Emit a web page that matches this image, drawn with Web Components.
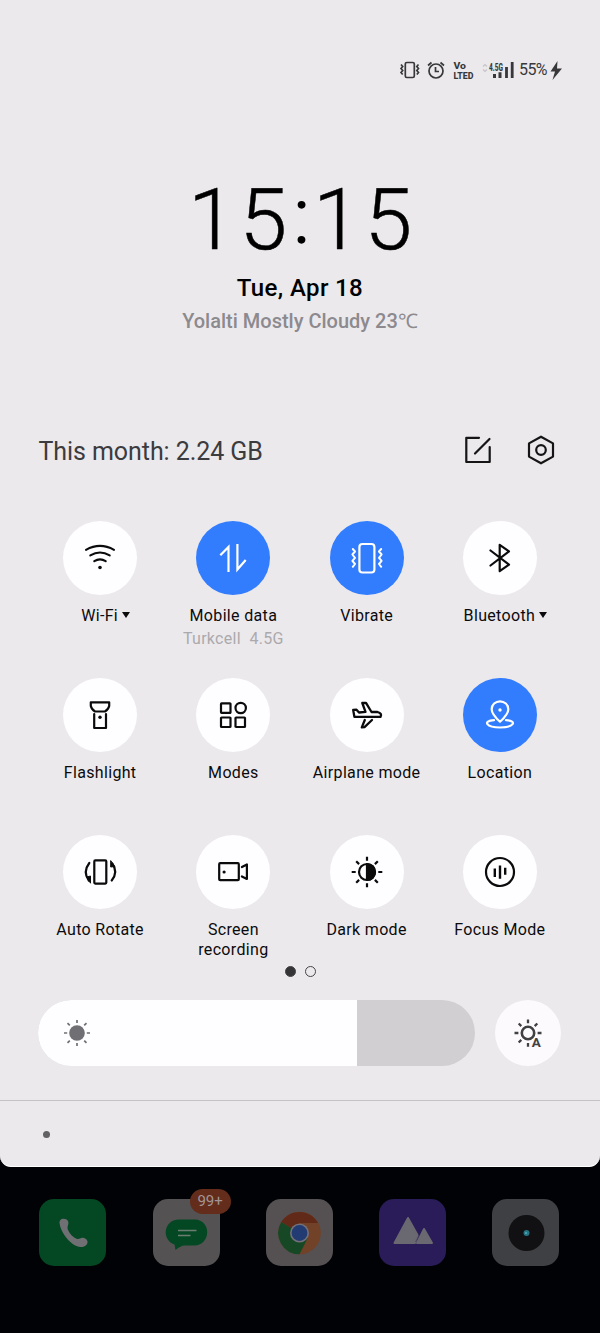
<!DOCTYPE html>
<html lang="en">
<head>
<meta charset="utf-8">
<title>Control center</title>
<style>
  html, body { margin: 0; background: #010205; }
  body { font-family: Roboto, "Liberation Sans", sans-serif; color: #0b0b0c; }
</style>
</head>
<body>
<phone-screen></phone-screen>

<script>
const ICONS = {
  wifi: `<g stroke-width="2.100"><path d="M-14-8.200Q0-16 14-8.200M-9.700-2.600Q0-8.500 9.700-2.600M-5.700 3.200Q0-.5 5.700 3.200"/></g><circle cy="9.500" r="1.800" fill="currentColor" stroke="none"/>`,
  data: `<path stroke-linejoin="miter" stroke-linecap="butt" stroke-width="2.200" d="M-12.700-2.700L-4.500-11V14M4.400-14V11.500L12.700 2"/>`,
  vibrate: `<rect x="-7.600" y="-14" width="15" height="28.500" rx="3"/><path stroke-width="2" d="M-14.200-9l2.200 2.500-2.600 3 2.600 3.300-2.600 3 2.600 3.200-2.200 2.800M14.200-9l-2.200 2.500 2.600 3-2.600 3.300 2.600 3-2.600 3.200 2.200 2.800"/>`,
  bluetooth: `<path d="M-9.500-7.500L9 6.700-.3 13.200V-13.200L9-6.700-9.500 7.500"/>`,
  flash: `<path d="M-9.200-12.700H9.200V-9Q8.400-5.500 5-3.500H-5Q-8.400-5.500-9.200-9ZM-5.800-1V13H6V-1"/><circle cy="2.200" r="1.700" fill="currentColor" stroke="none"/>`,
  modes: `<rect x="-12" y="-11.700" width="9.500" height="9.500" rx=".6"/><circle cx="7.700" cy="-7" r="5.200"/><rect x="-12" y="2.500" width="9.500" height="9.500" rx=".6"/><rect x="2.500" y="2.500" width="9.500" height="9.500" rx=".6"/>`,
  plane: `<path stroke-width="2.300" d="M-13.800-5L-12.600 1.900H13.500Q15.500-1.500 10.500-3H4.500L-1-12.200-4.700-12-1.500-3.200-8-2.500-10.500-5.300ZM-2.200 5L-5.200 12.400-2.500 12.200 5 5"/>`,
  location: `<path d="M0 6.800Q-8.500-1-8.300-6A8.300 7.700 0 0 1 8.300-6Q8.500-1 0 6.800ZM-6 5.200C-18 6-13.500 12.500 0 12.500S18 6 6 5.200"/><circle cy="-5" r="1.700" fill="currentColor" stroke="none"/>`,
  rotate: `<rect x="-5.700" y="-11.600" width="12" height="23.200" rx="1"/><path d="M-10.700-9Q-17.500 0-11.200 8.500M11.700 8.500Q18.500 0 12.200-8.500"/><path stroke-width="1" fill="currentColor" d="M-9.500 10.800V4L-13 5ZM10.700-11V-5L14.500-5.500Z"/>`,
  record: `<rect x="-13.800" y="-8.800" width="19.600" height="17" rx="1"/><path d="M8.900-4.900L13.900-7.500V7L8.900 4.500"/><circle cx="-8.900" cy="0" r="1.600" fill="currentColor" stroke="none"/>`,
  dark: `<circle r="8"/><path d="M0-8A8 8 0 0 1 0 8Z" fill="currentColor"/><path stroke-linecap="butt" d="M0-15.300V-11.300M0 11.300V15.300M-15.300 0H-11.300M11.300 0H15.300M-10.800-10.800L-7.900-7.900M10.800-10.800L7.900-7.900M-10.800 10.800L-7.900 7.900M10.800 10.800L7.900 7.900"/>`,
  focus: `<circle r="14"/><path stroke-linecap="butt" stroke-width="2.400" d="M-5.200-3.500V5M0-6.500V6.700M5.200-4.300V2.700"/>`,
  edit: `<path d="M1-12.200H-11.700V12H11.700V-3M-3 3.500L11.500-11"/>`,
  settings: `<path d="M0-13.300L12-6.600V6.600L0 13.300-12 6.600V-6.600Z"/><circle r="4.800"/>`,
  sun: `<circle r="7.800" fill="currentColor" stroke="none"/><path stroke-width="1.700" stroke-linecap="butt" d="M0-13V-10M0 10V13M-13 0H-9.800M9.800 0H13M-9.500-9.900L-7.200-7.600M9.500-9.900L7.200-7.600M-9.500 9.900L-7.200 7.600M9.500 9.900L7.200 7.600"/>`,
  auto: `<circle r="6.200" stroke-width="2.600"/><path stroke-width="2.300" stroke-linecap="butt" d="M0-13.500V-9.800M0 10V13.700M-13.500 0H-9.600M9.600 0H13.500M-9.300-9.500L-6.700-6.900M9.300-9.500L6.700-6.900M-9.300 9.500L-6.700 6.900"/><text x="3.800" y="13.600" font-size="13.500" font-weight="700" fill="currentColor" stroke="none" font-family="Roboto, sans-serif">A</text>`
};

function define(name, html, setup) {
  const template = document.createElement('template');
  template.innerHTML = html;
  customElements.define(name, class extends HTMLElement {
    constructor() {
      super();
      this.attachShadow({ mode: 'open' }).append(template.content.cloneNode(true));
    }
    connectedCallback() { if (setup) setup(this, this.shadowRoot); }
  });
}

define('line-icon', `
  <style>
    :host { display: block; width: 34px; height: 34px; flex: none; }
    svg { display: block; width: 100%; height: 100%; overflow: visible; }
  </style>
  <svg viewBox="-17 -17 34 34" fill="none" stroke="currentColor" stroke-width="2.200" stroke-linecap="round" stroke-linejoin="round"></svg>
`, (el, root) => { root.querySelector('svg').innerHTML = ICONS[el.getAttribute('name')]; });

define('status-bar', `
  <style>
    :host { display: flex; justify-content: flex-end; align-items: center; height: 20px; padding: 60px 38px 0 0; color: #38383a; }
    svg { display: block; overflow: visible; fill: none; stroke: currentColor; stroke-width: 1.700; }
    text { fill: currentColor; stroke: none; font-family: Roboto, sans-serif; font-weight: 800; }
    .vib { margin-right: 8px; } .alarm { margin-right: 8px; } .volte { margin-right: 8px; } .signal { margin-right: 5px; }
    span { font-size: 16px; line-height: 20px; width: 30px; letter-spacing: -.6px; white-space: nowrap; }
  </style>
  <svg class="vib" width="19" height="20"><rect x="5.300" y="2.500" width="9" height="15" rx="1.500"/><path d="M1 4.500l1.700 2L1 8.500l1.700 2L1 12.500l1.700 2M18.500 4.500l-1.700 2 1.700 2-1.700 2 1.700 2-1.700 2"/></svg>
  <svg class="alarm" width="18" height="20"><circle cx="9" cy="11" r="7"/><path d="M8.500 7V11.500H12M1 5.500L4.500 2.500M17 5.500L13.500 2.500"/></svg>
  <svg class="volte" width="21" height="20"><text x="0.500" y="8.700" font-size="8.800" textLength="12.500" lengthAdjust="spacingAndGlyphs">Vo</text><text x="0.500" y="18.800" font-size="8.800" textLength="20" lengthAdjust="spacingAndGlyphs">LTED</text></svg>
  <svg class="signal" width="32" height="20"><path stroke="#c6c4c8" stroke-width="1.200" d="M1 6.500L3 4.500 5 6.500M1 9.500L3 11.500 5 9.500"/><text x="7" y="10.800" font-size="10.500" textLength="14" lengthAdjust="spacingAndGlyphs">4.5G</text><path stroke-width="3" d="M12.500 14V18M18 12.300V18"/><path stroke-width="2.800" d="M24.500 7V18M30.200 2V18"/></svg>
  <span>55%</span>
  <svg width="13" height="20"><path fill="currentColor" stroke="none" d="M8.500 1L1.500 11.500H6L3.500 20 13 8.500H8Z"/></svg>
`);

define('lock-clock', `
  <style>
    :host { display: block; height: 355px; text-align: center; white-space: nowrap; }
    .time { height: 102px; padding-top: 89px; font-size: 86px; line-height: 102px; font-weight: 300; letter-spacing: 3.800px; color: #000; padding-left: 4px; -webkit-text-stroke: .5px #000; }
    .date { font-size: 24px; line-height: 30px; font-weight: 500; letter-spacing: .38px; margin-top: 2px; color: #000; }
    .weather { font-size: 20px; line-height: 26px; font-weight: 500; color: #8c8a8e; margin-top: 5px; }
  </style>
  <div class="time"><slot name="time"></slot></div>
  <div class="date"><slot name="date"></slot></div>
  <div class="weather"><slot name="weather"></slot></div>
`);

define('usage-row', `
  <style>
    :host { display: flex; align-items: center; height: 34px; padding: 0 42px 0 38.500px; margin-top: -2px; color: #3c3b3e; font-size: 25px; letter-spacing: -.07px; white-space: nowrap; }
    .label { padding-top: 2px; }
    .actions { display: flex; gap: 29px; margin-left: auto; color: #151516; }
  </style>
  <div class="label"><slot></slot></div>
  <div class="actions"><line-icon name="edit"></line-icon><line-icon name="settings"></line-icon></div>
`);

define('quick-tile', `
  <style>
    :host { display: flex; flex-direction: column; align-items: center; height: 157px; color: #0b0b0c; }
    .disc { width: 74px; height: 74px; border-radius: 50%; background: #fefdff; display: grid; place-items: center; }
    :host([active]) .disc { background: #327cfe; color: #fff; }
    .label { display: flex; align-items: center; justify-content: center; gap: 4px; margin-top: 11px; font-size: 16px; line-height: 20px; letter-spacing: .33px; text-align: center; white-space: nowrap; }
    .caret { display: none; width: 0; height: 0; border: 4px solid transparent; border-top: 6px solid; border-bottom: 0; margin-top: -2px; }
    :host([menu]) .caret { display: block; }
    :host([menu]) .label { padding-left: 11px; }
    .note { font-size: 16px; line-height: 20px; letter-spacing: .3px; color: #aba9ad; margin-top: 3px; white-space: pre; }
  </style>
  <div class="disc"><line-icon></line-icon></div>
  <div class="label"><span><slot></slot></span><i class="caret"></i></div>
  <div class="note"><slot name="note"></slot></div>
`, (el, root) => {
  const old = root.querySelector('line-icon');
  const icon = document.createElement('line-icon');
  icon.setAttribute('name', el.getAttribute('icon'));
  old.replaceWith(icon);
});

define('tile-grid', `
  <style>
    :host { display: grid; grid-template-columns: repeat(4, 1fr); padding: 0 33.500px; margin-top: 54px; height: 440px; grid-auto-rows: 157px; }
  </style>
  <slot></slot>
`);

define('page-dots', `
  <style>
    :host { display: flex; justify-content: center; gap: 9px; height: 11px; margin-top: 5px; }
    i { box-sizing: border-box; width: 11px; height: 11px; border: 1px solid #454447; border-radius: 50%; }
    .current { background: #343336; }
  </style>
  <i class="current"></i><i></i>
`);

define('brightness-row', `
  <style>
    :host { display: flex; gap: 20px; padding: 0 38px; margin-top: 23px; height: 66px; }
    .track { display: flex; width: 437px; border-radius: 33px; overflow: hidden; background: #d1cfd2; color: #706f73; }
    .fill { width: 318.500px; background: #fefdff; display: flex; align-items: center; padding-left: 21.500px; box-sizing: border-box; }
    .auto { width: 66px; border-radius: 50%; background: #fcfafc; display: grid; place-items: center; color: #414043; }
  </style>
  <div class="track"><div class="fill"><line-icon name="sun"></line-icon></div></div>
  <div class="auto"><line-icon name="auto"></line-icon></div>
`);

define('notice-strip', `
  <style>
    :host { display: flex; align-items: center; height: 66px; margin-top: 34px; border-top: 1px solid #c5c3c6; padding-left: 43px; }
    i { width: 7px; height: 7px; border-radius: 50%; background: #626164; }
  </style>
  <i></i>
`);

define('app-icon', `
  <style>
    :host { display: block; position: relative; width: 67px; height: 67px; border-radius: 15px; }
    svg { display: block; width: 67px; height: 67px; }
    ::slotted(.badge) { position: absolute; right: -11px; top: -10px; width: 41px; height: 25px; border-radius: 13px; background: #632c1b; color: #a29596; font-size: 15px; line-height: 25px; text-align: center; }
  </style>
  <svg viewBox="0 0 67 67"></svg><slot></slot>
`, (el, root) => {
  const art = {
    phone: `<path fill="#706f73" d="M20.500 24C20 19 27 18.500 29 22C30.500 25.500 27.500 27 29 31C31 35 34 38.500 38 40C41 40.500 41.500 38 45 39C50 40.500 49.500 46 45 47.500C38 50 30.500 43 26 37C23 33 21 28 20.500 24Z"/>`,
    chat: `<path fill="#034822" d="M26 20.500H41.500C59 21 58 46 41.500 46.500H31Q28 46.500 22.500 51L21.500 45.500C8.500 41 10 21 26 20.500Z"/><path fill="none" stroke="#6d7c73" stroke-width="1.700" d="M25 31.500H43.500M25 36.500H37.500"/>`,
    chrome: `<circle cx="33.500" cy="34" r="21.300" fill="#714128"/><path fill="#612a18" d="M33.500 34L15.300 23A21.300 21.300 0 0 1 52 24H33.500Z"/><path fill="#174825" d="M33.500 34L15.300 23A21.300 21.300 0 0 0 33.500 55.300L42 38.500Z"/><circle cx="33.500" cy="34" r="9.500" fill="#737079"/><circle cx="33.500" cy="34" r="7.900" fill="#223b73"/>`,
    gallery: `<g fill="#6a6870" stroke="#6a6870" stroke-width="2" stroke-linejoin="round"><path d="M15.500 44L29 19 38.500 36 36 44Z"/><path d="M38 44L45 30 53 44Z"/></g><path fill="none" stroke="#4b4263" stroke-width=".8" d="M40 36.500L36.500 43"/>`,
    camera: `<circle cx="34.500" cy="34" r="18" fill="#111012"/><circle cx="34.500" cy="34" r="3" fill="#287485"/><circle cx="34" cy="34" r="1" fill="#4bafc0"/>`
  };
  const bg = { phone: '#034823', chat: '#545253', chrome: '#555152', gallery: '#2a1b59', camera: '#3e4043' };
  const kind = el.getAttribute('kind');
  el.style.background = bg[kind];
  root.querySelector('svg').innerHTML = art[kind];
});

define('app-dock', `
  <style>:host { display: flex; gap: 46.300px; padding: 32px 0 0 39.300px; }</style>
  <slot></slot>
`);

define('control-panel', `
  <style>
    :host { display: block; box-sizing: border-box; height: 1167px; background: #ebe9ec; border-bottom: 1px solid #fff; border-radius: 0 0 11px 11px; overflow: hidden; }
  </style>
  <slot></slot>
`);

define('phone-screen', `
  <style>
    :host { display: block; width: 600px; height: 1333px; overflow: hidden; background: #010205; }
    .colon { font-size: 77px; line-height: 0; vertical-align: 6px; margin: 0 -.5px 0 2.500px; -webkit-text-stroke: 1.500px #000; }
  </style>
  <control-panel>
    <status-bar></status-bar>
    <lock-clock><span slot="time">15<span class="colon">:</span>15</span><span slot="date">Tue, Apr 18</span><span slot="weather">Yolalti Mostly Cloudy 23℃</span></lock-clock>
    <usage-row>This month: 2.24 GB</usage-row>
    <tile-grid>
      <quick-tile icon="wifi" menu>Wi-Fi</quick-tile>
      <quick-tile icon="data" active>Mobile data<span slot="note">Turkcell  4.5G</span></quick-tile>
      <quick-tile icon="vibrate" active>Vibrate</quick-tile>
      <quick-tile icon="bluetooth" menu>Bluetooth</quick-tile>
      <quick-tile icon="flash">Flashlight</quick-tile>
      <quick-tile icon="modes">Modes</quick-tile>
      <quick-tile icon="plane">Airplane mode</quick-tile>
      <quick-tile icon="location" active>Location</quick-tile>
      <quick-tile icon="rotate">Auto Rotate</quick-tile>
      <quick-tile icon="record">Screen<br>recording</quick-tile>
      <quick-tile icon="dark">Dark mode</quick-tile>
      <quick-tile icon="focus">Focus Mode</quick-tile>
    </tile-grid>
    <page-dots></page-dots>
    <brightness-row></brightness-row>
    <notice-strip></notice-strip>
  </control-panel>
  <app-dock>
    <app-icon kind="phone"></app-icon>
    <app-icon kind="chat"><span class="badge">99+</span></app-icon>
    <app-icon kind="chrome"></app-icon>
    <app-icon kind="gallery"></app-icon>
    <app-icon kind="camera"></app-icon>
  </app-dock>
`);
</script>
</body>
</html>
